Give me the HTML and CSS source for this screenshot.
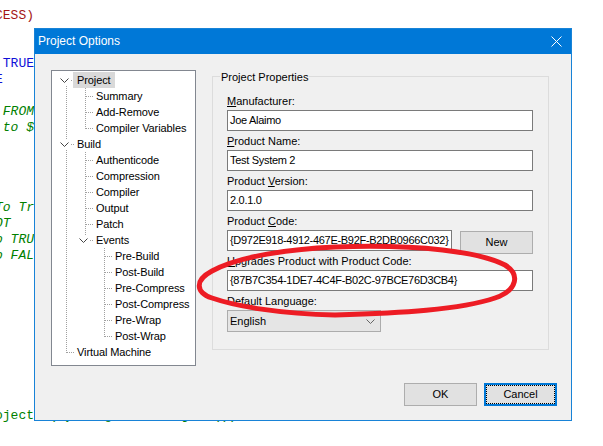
FILE: index.html
```html
<!DOCTYPE html>
<html lang="en">
<head>
<meta charset="utf-8">
<title>Project Options</title>
<link rel="stylesheet" href="styles.css">
</head>
<body>
<pre class="code"><span class="cr">CESS)</span>


 <span class="kw">TRUE</span>
<span class="kw">E</span>

 <span class="cm">FROM</span>
 <span class="cm">to $</span>




<span class="cm">To Tr</span>
<span class="cm">OT</span>
<span class="cm">o TRU</span>
<span class="cm">o FAL</span>









<span class="st">oject, (ByVal gRef As Object())</span></pre>

<div class="dialog">
  <div class="titlebar">
    <span class="title">Project Options</span>
    <svg class="close" width="11" height="11" viewBox="0 0 11 11"><path d="M0.5 0.5 L10.5 10.5 M10.5 0.5 L0.5 10.5" stroke="#fff" stroke-width="1" fill="none"/></svg>
  </div>
  <div class="body">
    <div class="top">
      <div class="tree">
        <div class="row"><span class="c xp"><svg class="chev" width="11" height="10" viewBox="0 0 11 10"><rect width="11" height="10" fill="#fff"/><path d="M1.5 3.5 L5.5 7.5 L9.5 3.5" stroke="#444" stroke-width="1" fill="none"/></svg></span><span class="lbl sel">Project</span></div>
        <div class="row"><span class="c v"></span><span class="c t"></span><span class="lbl">Summary</span></div>
        <div class="row"><span class="c v"></span><span class="c t"></span><span class="lbl">Add-Remove</span></div>
        <div class="row"><span class="c v"></span><span class="c l"></span><span class="lbl">Compiler Variables</span></div>
        <div class="row"><span class="c xb"><svg class="chev" width="11" height="10" viewBox="0 0 11 10"><rect width="11" height="10" fill="#fff"/><path d="M1.5 3.5 L5.5 7.5 L9.5 3.5" stroke="#444" stroke-width="1" fill="none"/></svg></span><span class="lbl">Build</span></div>
        <div class="row"><span class="c v"></span><span class="c t"></span><span class="lbl">Authenticode</span></div>
        <div class="row"><span class="c v"></span><span class="c t"></span><span class="lbl">Compression</span></div>
        <div class="row"><span class="c v"></span><span class="c t"></span><span class="lbl">Compiler</span></div>
        <div class="row"><span class="c v"></span><span class="c t"></span><span class="lbl">Output</span></div>
        <div class="row"><span class="c v"></span><span class="c t"></span><span class="lbl">Patch</span></div>
        <div class="row"><span class="c v"></span><span class="c xe"><svg class="chev" width="11" height="10" viewBox="0 0 11 10"><rect width="11" height="10" fill="#fff"/><path d="M1.5 3.5 L5.5 7.5 L9.5 3.5" stroke="#444" stroke-width="1" fill="none"/></svg></span><span class="lbl">Events</span></div>
        <div class="row"><span class="c v"></span><span class="c"></span><span class="c t"></span><span class="lbl">Pre-Build</span></div>
        <div class="row"><span class="c v"></span><span class="c"></span><span class="c t"></span><span class="lbl">Post-Build</span></div>
        <div class="row"><span class="c v"></span><span class="c"></span><span class="c t"></span><span class="lbl">Pre-Compress</span></div>
        <div class="row"><span class="c v"></span><span class="c"></span><span class="c t"></span><span class="lbl">Post-Compress</span></div>
        <div class="row"><span class="c v"></span><span class="c"></span><span class="c t"></span><span class="lbl">Pre-Wrap</span></div>
        <div class="row"><span class="c v"></span><span class="c"></span><span class="c l"></span><span class="lbl">Post-Wrap</span></div>
        <div class="row"><span class="c l"></span><span class="lbl">Virtual Machine</span></div>
      </div>

      <div class="group">
        <span class="legend">Project Properties</span>
        <label class="flabel"><u>M</u>anufacturer:</label>
        <div class="input">Joe Alaimo</div>
        <label class="flabel"><u>P</u>roduct Name:</label>
        <div class="input">Test System 2</div>
        <label class="flabel">Product <u>V</u>ersion:</label>
        <div class="input">2.0.1.0</div>
        <label class="flabel">Product <u>C</u>ode:</label>
        <div class="coderow">
          <div class="input short">{D972E918-4912-467E-B92F-B2DB0966C032}</div>
          <div class="btn newbtn">New</div>
        </div>
        <label class="flabel"><u>U</u>pgrades Product with Product Code:</label>
        <div class="input">{87B7C354-1DE7-4C4F-B02C-97BCE76D3CB4}</div>
        <label class="flabel">Default Language:</label>
        <div class="select"><span>English</span><svg width="9" height="5" viewBox="0 0 9 5"><path d="M0.5 0.5 L4.5 4.5 L8.5 0.5" stroke="#666" stroke-width="1" fill="none"/></svg></div>
      </div>
    </div>

    <div class="footer">
      <div class="btn">OK</div>
      <div class="btn default"><span class="focus">Cancel</span></div>
    </div>
  </div>
</div>

<svg class="annot" width="603" height="446" viewBox="0 0 603 446">
  <path d="M335 247 C420 244 480 252 505 265 C520 274 518 290 495 298 C460 310 400 313 335 315 C280 314 235 306 212 298 C195 292 195 280 212 271 C240 256 290 249 335 247 Z" fill="none" stroke="#ed1c24" stroke-width="5" stroke-linejoin="round"/>
</svg>
</body>
</html>
```

FILE: styles.css
```css
:root {
  --dv: repeating-linear-gradient(to bottom, #a0a0a0 0 1px, transparent 1px 2px);
  --dh: repeating-linear-gradient(to right, #a0a0a0 0 1px, transparent 1px 2px);
}

html, body {
  margin: 0;
  padding: 0;
  background: #fff;
  width: 603px;
  height: 446px;
  overflow: hidden;
}

.code {
  margin: 0 0 0 -5px;
  padding: 8px 0 0 0;
  font-family: "Liberation Mono", "Courier New", monospace;
  font-size: 13px;
  line-height: 16px;
  color: #000;
}
.cr { color: #a31515; }
.kw { color: #1010d8; }
.cm { color: #008000; font-style: italic; }
.st { color: #008000; }

.dialog {
  position: absolute;
  left: 34px;
  top: 28px;
  width: 538px;
  box-sizing: border-box;
  border: 1px solid #1883d7;
  background: #f0f0f0;
  font-family: "Liberation Sans", Arial, sans-serif;
  font-size: 11px;
  color: #000;
}

.titlebar {
  height: 25px;
  background: #0078d7;
  display: flex;
  align-items: center;
  justify-content: space-between;
  padding-left: 3px;
}
.title {
  color: #fff;
  font-size: 12px;
  line-height: 25px;
}
.close {
  margin-right: 9px;
  display: block;
}

.body {
  padding: 16px 14px 14px 16px;
}

.top {
  display: flex;
  gap: 16px;
  align-items: flex-start;
}

.tree {
  width: 145px;
  height: 296px;
  box-sizing: border-box;
  border: 1px solid #828790;
  background: #fff;
  padding: 1px 0 0 4px;
}
.row {
  display: flex;
  height: 16px;
  align-items: center;
}
.c {
  flex: none;
  width: 19px;
  height: 16px;
  display: flex;
  align-items: center;
  background-repeat: no-repeat;
}
.v {
  background-image: var(--dv);
  background-size: 1px 16px;
  background-position: 10px 0;
}
.t {
  background-image: var(--dv), var(--dh);
  background-size: 1px 16px, 8px 1px;
  background-position: 10px 0, 11px 8px;
}
.l {
  background-image: var(--dv), var(--dh);
  background-size: 1px 9px, 8px 1px;
  background-position: 10px 0, 11px 8px;
}
.xp {
  background-image: var(--dv), var(--dh);
  background-size: 1px 4px, 4px 1px;
  background-position: 10px 12px, 15px 8px;
}
.xb {
  background-image: var(--dv), var(--dh);
  background-size: 1px 16px, 4px 1px;
  background-position: 10px 0, 15px 8px;
}
.xe {
  background-image: var(--dv), var(--dh);
  background-size: 1px 6px, 4px 1px;
  background-position: 10px 0, 15px 8px;
}
.chev {
  display: block;
  margin-left: 3px;
}
.lbl {
  line-height: 16px;
  height: 16px;
  padding: 0 2px;
  white-space: nowrap;
  letter-spacing: -0.1px;
}
.lbl.sel {
  background: #d9d9d9;
  margin-left: -2px;
  padding: 0 4px 0 4px;
}

.group {
  width: 337px;
  height: 274px;
  box-sizing: border-box;
  margin-top: 6px;
  border: 1px solid #dcdcdc;
  padding: 0 15px 0 14px;
  display: flex;
  flex-direction: column;
  align-items: flex-start;
}
.legend {
  margin: -7px 0 10px -7px;
  padding: 0 1px;
  line-height: 14px;
  background: #f0f0f0;
}
.flabel {
  display: block;
  line-height: 14px;
  margin-bottom: 2px;
  white-space: nowrap;
}
.input {
  width: 306px;
  height: 21px;
  box-sizing: border-box;
  border: 1px solid #7a7a7a;
  background: #fff;
  line-height: 19px;
  padding: 0 2px;
  margin-bottom: 3px;
  white-space: nowrap;
  overflow: hidden;
  letter-spacing: -0.3px;
}
.coderow {
  display: flex;
  gap: 8px;
  height: 21px;
  margin-bottom: 3px;
  align-items: flex-start;
}
.input.short {
  width: 225px;
  margin-bottom: 0;
}
.btn {
  width: 73px;
  height: 23px;
  box-sizing: border-box;
  border: 1px solid #adadad;
  background: #e1e1e1;
  display: flex;
  align-items: center;
  justify-content: center;
  line-height: 21px;
}
.newbtn {
  margin-top: 1px;
  flex: none;
}
.select {
  width: 154px;
  height: 22px;
  box-sizing: border-box;
  border: 1px solid #acacac;
  background: #e5e5e5;
  display: flex;
  align-items: center;
  justify-content: space-between;
  padding: 0 5px 0 2px;
}
.select svg { display: block; }

.footer {
  margin-top: 17px;
  display: flex;
  justify-content: flex-end;
  gap: 7px;
}
.btn.default {
  border: 2px solid #0078d7;
  padding: 0;
}
.focus {
  flex: 1;
  align-self: stretch;
  border: 1px dotted #000;
  display: flex;
  align-items: center;
  justify-content: center;
}

.annot {
  position: absolute;
  left: 0;
  top: 0;
  pointer-events: none;
}
```
